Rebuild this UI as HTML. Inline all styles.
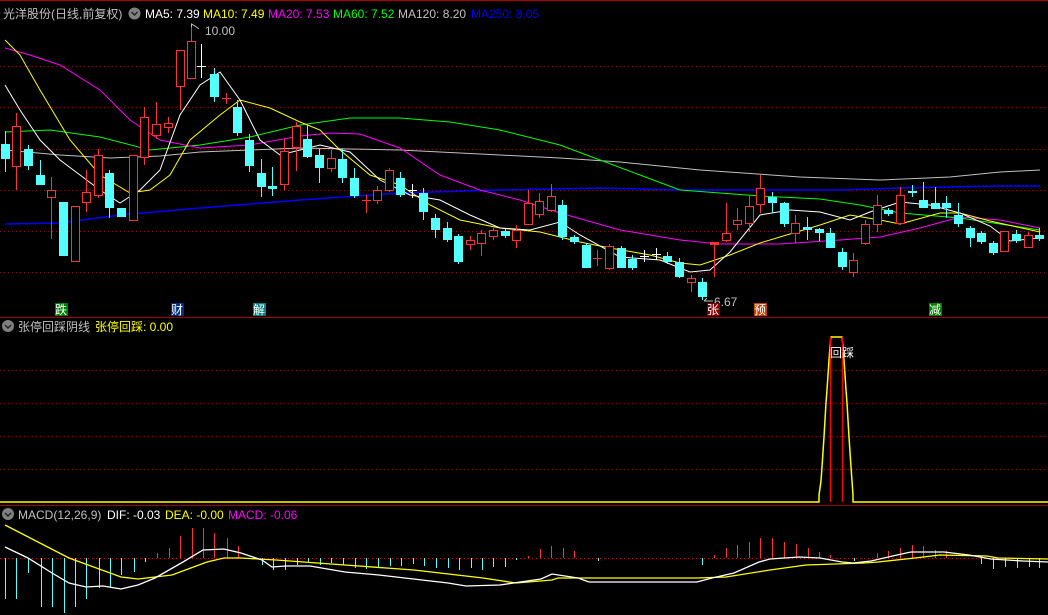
<!DOCTYPE html>
<html><head><meta charset="utf-8"><style>
html,body{margin:0;padding:0;background:#000;width:1048px;height:615px;overflow:hidden}
svg{display:block}
text{font-family:"Liberation Sans","Noto Sans CJK SC",sans-serif;font-size:12px}
</style></head><body>
<svg width="1048" height="615" viewBox="0 0 1048 615" xmlns="http://www.w3.org/2000/svg">
<rect width="1048" height="615" fill="#000"/>
<line x1="0" y1="0.5" x2="1048" y2="0.5" stroke="#b00000"/>
<!-- grid -->
<g stroke="#a00000" stroke-dasharray="1,3">
<line x1="0" y1="66.5" x2="1048" y2="66.5"/><line x1="0" y1="107.5" x2="1048" y2="107.5"/>
<line x1="0" y1="149.5" x2="1048" y2="149.5"/><line x1="0" y1="190.5" x2="1048" y2="190.5"/>
<line x1="0" y1="231.5" x2="1048" y2="231.5"/><line x1="0" y1="272.5" x2="1048" y2="272.5"/>
<line x1="0" y1="370.5" x2="1048" y2="370.5"/><line x1="0" y1="403.5" x2="1048" y2="403.5"/>
<line x1="0" y1="436.5" x2="1048" y2="436.5"/><line x1="0" y1="469.5" x2="1048" y2="469.5"/>
<line x1="0" y1="558.5" x2="1048" y2="558.5" stroke="#e00000"/>
</g>
<line x1="0" y1="317.5" x2="1048" y2="317.5" stroke="#a00000"/>
<line x1="0" y1="505.5" x2="1048" y2="505.5" stroke="#a00000"/>

<!-- MA lines -->
<g fill="none" stroke-width="1">
<polyline stroke="#c0c0c0" points="5,150 60,155 110,158 160,156 200,152 250,150 300,148 400,150 500,155 560,158 620,162 700,170 800,177 880,180 950,177 1000,172 1040,170"/>
<polyline stroke="#0000ff" stroke-width="1.5" points="5,224 60,223 120,215 200,208 300,200 400,193 500,190 600,188 680,190 840,190 900,188 1000,186 1040,186"/>
<polyline stroke="#00ff00" points="5,132 50,130 100,137 150,150 200,145 250,137 300,125 350,118 400,118 450,122 500,130 560,145 600,160 640,175 680,190 760,196 820,199 860,205 900,213 960,218 1000,224 1040,230"/>
<polyline stroke="#ff00ff" points="5,48 30,55 60,65 100,90 130,120 160,140 200,148 250,145 300,136 330,133 360,134 400,148 440,175 480,190 520,200 560,213 620,230 680,240 720,244 780,244 840,240 880,237 920,228 960,217 1000,220 1040,228"/>
<polyline stroke="#ffff00" points="5,40 20,55 40,90 70,140 100,175 130,193 150,190 170,175 190,140 220,115 240,100 270,108 300,122 320,130 340,150 370,175 400,185 430,205 460,220 500,228 540,232 580,242 610,248 650,255 680,263 700,265 730,255 760,243 790,234 820,225 850,215 880,220 900,224 940,213 960,213 990,221 1040,232"/>
<polyline stroke="#ffffff" points="5,85 20,110 40,140 60,160 80,175 100,190 120,203 140,190 160,170 180,115 200,85 220,72 240,100 260,140 280,155 300,150 320,145 350,152 380,180 410,195 440,200 470,215 500,228 530,230 560,222 580,235 620,257 660,260 690,272 710,270 730,252 760,215 790,210 820,212 850,220 870,212 900,202 930,205 960,213 990,226 1010,241 1040,238"/>
</g>

<!-- cyan candles -->
<g fill="#54ffff" stroke="#54ffff">
<path fill="none" d="M5.5 131V172M28.5 145V170M40.5 160V185M109.5 170V218M214.5 68V102M237.5 100V136M249.5 134V172M261.5 159V197M272.5 167V196M307.5 125V158M319.5 149V183M342.5 149V183M354.5 168V198M400.5 172V197M423.5 188V220M435.5 214V238M447.5 222V242M458.5 234V264M505.5 229V238M562.5 200V240M574.5 235V244M586.5 243V268M621.5 246V268M632.5 255V270M667.5 252V264M679.5 258V278M702.5 278V300M772.5 192V213M784.5 202V227M807.5 217V240M819.5 228V241M830.5 228V248M842.5 248V270M888.5 208V216M912.5 185V197M923.5 182V208M935.5 187V209M946.5 196V218M958.5 203V227M970.5 226V247M981.5 231V244M993.5 241V255M1016.5 230V243M1039.5 228V241"/>
<rect x="1.5" y="144.5" width="8" height="14"/><rect x="24.5" y="149.5" width="8" height="16"/><rect x="36.5" y="175.5" width="8" height="9"/><rect x="59.5" y="202.5" width="8" height="53"/>
<rect x="105.5" y="173.5" width="8" height="34"/><rect x="117.5" y="208.5" width="8" height="8"/><rect x="210.5" y="74.5" width="8" height="22"/>
<rect x="233.5" y="107.5" width="8" height="25"/><rect x="245.5" y="140.5" width="8" height="25"/><rect x="257.5" y="173.5" width="8" height="13"/><rect x="268.5" y="186.5" width="8" height="2"/>
<rect x="303.5" y="139.5" width="8" height="17"/><rect x="315.5" y="155.5" width="8" height="12"/><rect x="338.5" y="159.5" width="8" height="18"/><rect x="350.5" y="178.5" width="8" height="17"/>
<rect x="396.5" y="178.5" width="8" height="16"/><rect x="419.5" y="193.5" width="8" height="18"/><rect x="431.5" y="218.5" width="8" height="11"/><rect x="443.5" y="228.5" width="8" height="11"/><rect x="454.5" y="236.5" width="8" height="25"/>
<rect x="501.5" y="231.5" width="8" height="4"/><rect x="558.5" y="205.5" width="8" height="31"/><rect x="570.5" y="237.5" width="8" height="4"/><rect x="582.5" y="245.5" width="8" height="22"/>
<rect x="617.5" y="248.5" width="8" height="19"/><rect x="628.5" y="259.5" width="8" height="8"/><rect x="663.5" y="256.5" width="8" height="5"/><rect x="675.5" y="262.5" width="8" height="14"/><rect x="698.5" y="282.5" width="8" height="14"/>
<rect x="768.5" y="197.5" width="8" height="5"/><rect x="780.5" y="203.5" width="8" height="20"/><rect x="803.5" y="227.5" width="8" height="2"/><rect x="815.5" y="229.5" width="8" height="3"/><rect x="826.5" y="233.5" width="8" height="14"/><rect x="838.5" y="252.5" width="8" height="14"/>
<rect x="884.5" y="210.5" width="8" height="3"/><rect x="908.5" y="191.5" width="8" height="1"/><rect x="919.5" y="200.5" width="8" height="7"/><rect x="931.5" y="203.5" width="8" height="5"/><rect x="942.5" y="203.5" width="8" height="4"/>
<rect x="954.5" y="215.5" width="8" height="8"/><rect x="966.5" y="228.5" width="8" height="9"/><rect x="977.5" y="233.5" width="8" height="8"/><rect x="989.5" y="243.5" width="8" height="9"/><rect x="1012.5" y="234.5" width="8" height="6"/><rect x="1035.5" y="235.5" width="8" height="3"/>
</g>

<!-- red candles -->
<g fill="#000" stroke="#ff3232">
<path d="M16.5 113V190M51.5 177V239M86.5 170V212M98.5 149V198M144.5 107V165M156.5 102V139M168.5 117V133M180.5 50V110M191.5 27V78M226.5 93V104M222 98.5H231M284.5 139V190M296.5 122V171M331.5 150V172M366.5 195V213M362 200.5H371M377.5 186V204M389.5 168V192M470.5 236V250M481.5 230V256M493.5 228V240M516.5 225V248M528.5 190V225M539.5 193V218M551.5 184V212M597.5 250V266M593 258.5H602M609.5 244V270M691.5 275V292M714.5 242V277M726.5 203V242M737.5 208V230M749.5 195V232M760.5 175V213M795.5 215V243M853.5 253V277M865.5 220V245M877.5 195V232M900.5 187V225M1004.5 231V251M1028.5 232V248"/>
<rect x="12.5" y="126.5" width="8" height="40"/><rect x="47.5" y="190.5" width="8" height="7"/><rect x="71.5" y="206.5" width="8" height="55"/><rect x="82.5" y="192.5" width="8" height="10"/><rect x="94.5" y="155.5" width="8" height="40"/>
<rect x="129.5" y="155.5" width="8" height="65"/><rect x="140.5" y="117.5" width="8" height="40"/><rect x="152.5" y="124.5" width="8" height="11"/><rect x="164.5" y="123.5" width="8" height="4"/>
<rect x="176.5" y="50.5" width="8" height="36"/><rect x="187.5" y="41.5" width="8" height="37"/>
<rect x="280.5" y="151.5" width="8" height="33"/><rect x="292.5" y="126.5" width="8" height="21"/><rect x="327.5" y="158.5" width="8" height="10"/>
<rect x="373.5" y="190.5" width="8" height="10"/><rect x="385.5" y="170.5" width="8" height="20"/>
<rect x="466.5" y="240.5" width="8" height="4"/><rect x="477.5" y="233.5" width="8" height="10"/><rect x="489.5" y="230.5" width="8" height="6"/><rect x="512.5" y="230.5" width="8" height="10"/>
<rect x="524.5" y="203.5" width="8" height="21"/><rect x="535.5" y="201.5" width="8" height="13"/><rect x="547.5" y="196.5" width="8" height="14"/><rect x="605.5" y="246.5" width="8" height="22"/>
<rect x="687.5" y="278.5" width="8" height="4"/><rect x="710.5" y="242.5" width="8" height="2" fill="#ff3232"/><rect x="722.5" y="233.5" width="8" height="7"/><rect x="733.5" y="220.5" width="8" height="4"/><rect x="745.5" y="206.5" width="8" height="17"/><rect x="756.5" y="188.5" width="8" height="16"/>
<rect x="791.5" y="223.5" width="8" height="10"/><rect x="849.5" y="260.5" width="8" height="12"/><rect x="861.5" y="224.5" width="8" height="19"/><rect x="873.5" y="205.5" width="8" height="19"/><rect x="896.5" y="195.5" width="8" height="28"/>
<rect x="1000.5" y="231.5" width="8" height="20"/><rect x="1024.5" y="235.5" width="8" height="12"/>
</g>
<!-- white crosses -->
<path stroke="#fff" fill="none" d="M201.5 44V78M197 66.5H206M412.5 184V198M408 190.5H417M644.5 250V262M640 256.5H649M656.5 248V260M652 254.5H661"/>
<!-- price labels -->
<path stroke="#c0c0c0" fill="none" d="M191.5 27V24L195 26L199 29"/>
<text x="205" y="35" fill="#c0c0c0">10.00</text>
<path stroke="#c0c0c0" fill="none" d="M704 301H713M704 301l3-3"/>
<text x="714" y="306" fill="#c0c0c0">6.67</text>

<!-- event labels -->
<rect x="55" y="303" width="13" height="13" fill="#008000"/><text x="55" y="314" fill="#fff">跌</text>
<rect x="171" y="303" width="13" height="13" fill="#003080"/><text x="171" y="314" fill="#fff">财</text>
<rect x="253" y="303" width="13" height="13" fill="#008080"/><text x="253" y="314" fill="#fff">解</text>
<rect x="707" y="303" width="13" height="13" fill="#800000"/><text x="707" y="314" fill="#fff">张</text>
<rect x="754" y="303" width="13" height="13" fill="#c04000"/><text x="754" y="314" fill="#fff">预</text>
<rect x="929" y="303" width="13" height="13" fill="#008000"/><text x="929" y="314" fill="#fff">减</text>

<!-- header -->
<text x="3" y="18" fill="#c0c0c0">光洋股份(日线,前复权)</text>
<circle cx="134.5" cy="13.5" r="6" fill="#808080"/><path d="M131.5 12l3 3 3-3" stroke="#222" fill="none" stroke-width="1.5"/>
<text x="145" y="18" fill="#fff">MA5: 7.39</text>
<text x="203" y="18" fill="#ffff00">MA10: 7.49</text>
<text x="268" y="18" fill="#ff00ff">MA20: 7.53</text>
<text x="333" y="18" fill="#00ff00">MA60: 7.52</text>
<text x="398" y="18" fill="#c0c0c0">MA120: 8.20</text>
<text x="471" y="18" fill="#0000ff">MA250: 8.05</text>

<!-- sub pane -->
<circle cx="8" cy="326" r="6" fill="#808080"/><path d="M5 325l3 3 3-3" stroke="#222" fill="none" stroke-width="1.5"/>
<text x="18" y="331" fill="#c0c0c0">张停回踩阴线</text>
<text x="95" y="331" fill="#ffff00">张停回踩: 0.00</text>
<polyline fill="none" stroke="#ffff00" stroke-width="1.5" points="0,502 819,502 819,495 821,481 822,467 823,452 824,437 825,420 826,403 827,390 828,375 829,360 830,346 831,337 842,337 843,346 844,360 845,375 846,390 847,403 848,420 849,437 850,452 851,467 852,481 853,495 853,502 1048,502"/>
<path stroke="#ff0000" stroke-width="1.5" d="M830.5 337V502M842.5 337V502"/>
<text x="830" y="357" fill="#fff">回踩</text>

<!-- MACD -->
<circle cx="8" cy="514" r="6" fill="#808080"/><path d="M5 513l3 3 3-3" stroke="#222" fill="none" stroke-width="1.5"/>
<text x="18" y="519" fill="#c0c0c0">MACD(12,26,9)</text>
<text x="107" y="519" fill="#fff">DIF: -0.03</text>
<text x="165" y="519" fill="#ffff00">DEA: -0.00</text>
<text x="228" y="519" fill="#ff00ff">MACD: -0.06</text>
<path stroke="#54ffff" d="M5.5 558V599M16.5 558V599M28.5 558V573M41.5 558V607M52.5 558V607M64.5 558V613M75.5 558V607M86.5 558V599M99.5 558V588M110.5 558V587M121.5 558V575M134.5 558V572M145.5 558V562M262.5 558V565M273.5 558V570M285.5 558V570M297.5 558V565M308.5 558V563M320.5 558V565M331.5 558V563M343.5 558V565M355.5 558V568M366.5 558V569M378.5 558V568M390.5 558V566M401.5 558V566M413.5 558V564M424.5 558V566M436.5 558V568M448.5 558V568M459.5 558V570M471.5 558V568M482.5 558V570M493.5 558V567M505.5 558V567M516.5 558V560M598.5 558V561M702.5 558V565M854.5 558V561M981.5 558V564M993.5 558V569M1005.5 558V567M1017.5 558V568M1029.5 558V567M1039.5 558V568"/>
<path stroke="#ff3232" d="M157.5 558V553M169.5 558V548M180.5 558V536M192.5 558V528M203.5 558V528M214.5 558V533M227.5 558V538M238.5 558V546M528.5 558V556M540.5 558V549M551.5 558V546M563.5 558V548M574.5 558V551M714.5 558V555M726.5 558V548M737.5 558V545M749.5 558V542M760.5 558V538M772.5 558V538M784.5 558V542M796.5 558V544M808.5 558V548M819.5 558V552M830.5 558V555M877.5 558V553M888.5 558V551M900.5 558V548M912.5 558V545M923.5 558V546M935.5 558V550M946.5 558V551"/>
<polyline fill="none" stroke="#ffff00" stroke-width="1.3" points="5,525 69,558 121,577 138,579 172,575 207,562 224,558 241,558 276,560 345,565 414,570 483,578 516,583 552,580 558,578 697,578 726,577 770,570 806,565 864,563 878,562 915,558 940,555 987,556 998,558 1048,559"/>
<polyline fill="none" stroke="#ffffff" stroke-width="1.3" points="5,547 28,558 52,573 69,583 86,587 103,586 121,589 138,585 155,578 183,562 203,550 224,549 241,553 262,560 272,567 286,566 310,566 345,572 379,575 448,583 466,586 500,585 541,579 552,574 578,578 589,582 697,582 712,578 734,573 759,562 770,559 799,557 820,558 842,562 853,563 871,561 897,555 911,552 944,552 969,555 991,559 1023,561 1048,562"/>
</svg>
</body></html>
